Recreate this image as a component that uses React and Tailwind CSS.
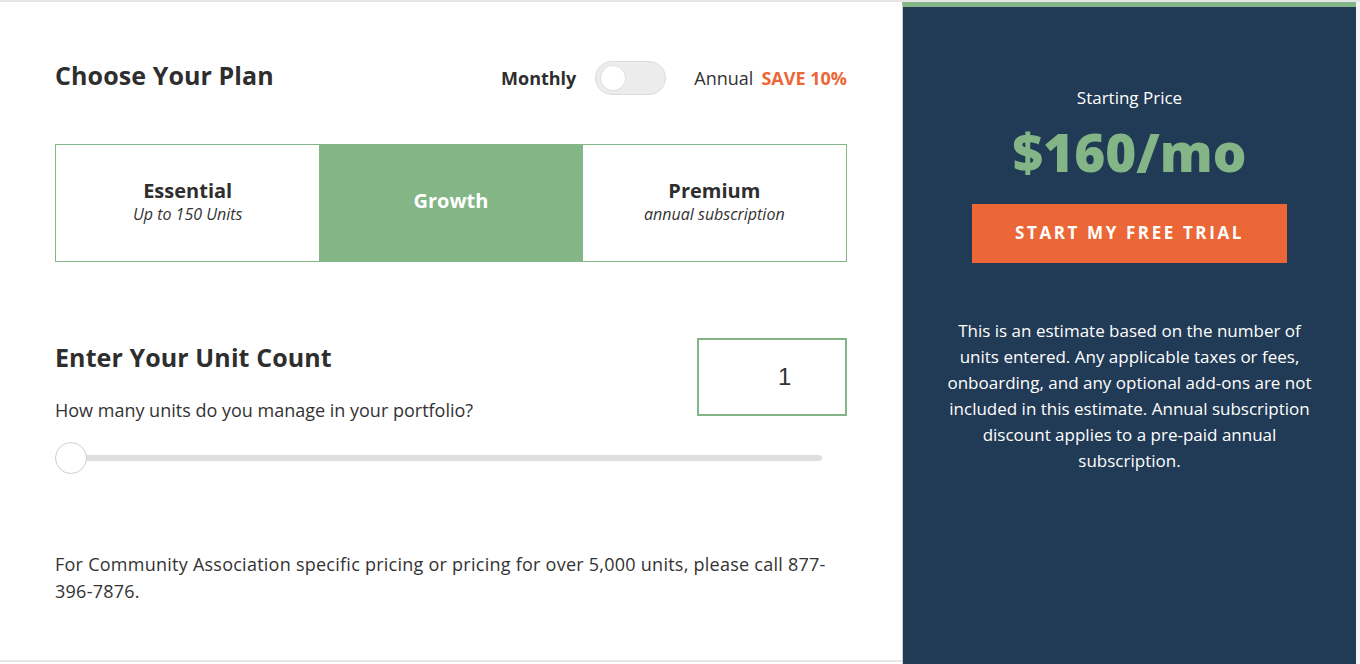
import { useState } from 'react'

const plans = [
  { name: 'Essential', note: 'Up to 150 Units' },
  { name: 'Growth', note: null },
  { name: 'Premium', note: 'annual subscription' },
]

export default function App() {
  const [plan, setPlan] = useState('Growth')
  const [annual, setAnnual] = useState(false)
  const [units, setUnits] = useState(1)

  return (
    <div className="flex h-[664px] w-[1360px] border-t-2 border-[#e6e6e6] bg-white font-['Open_Sans',sans-serif] text-[#333]">
      <section className="mb-[2px] flex flex-1 flex-col border-b-2 border-[#e6e6e6] pl-[55px] pr-[55px]">
        <div className="mt-[55px] flex items-center justify-between">
          <h2 className="mb-[5px] text-[25px] font-bold tracking-[0.1px] text-[#2e2e2e]">Choose Your Plan</h2>
          <div className="flex items-center text-[18px]">
            <span className="font-bold text-[#2e2e2e]">Monthly</span>
            <button
              type="button"
              onClick={() => setAnnual(!annual)}
              className="ml-[19px] flex h-[34px] w-[71px] items-center rounded-full border border-[#dcdcdc] bg-[#ececec] px-[4px]"
            >
              <span
                className={
                  annual
                    ? 'ml-auto h-[26px] w-[26px] rounded-full border border-[#e0e0e0] bg-white'
                    : 'h-[26px] w-[26px] rounded-full border border-[#e0e0e0] bg-white'
                }
              />
            </button>
            <span className="ml-[28px] text-[#333]">Annual</span>
            <span className="ml-[8px] font-bold text-[#ec6737]">SAVE 10%</span>
          </div>
        </div>

        <div className="mt-[44px] grid h-[118px] grid-cols-3 border border-[#84b586]">
          {plans.map((p) => (
            <button
              key={p.name}
              type="button"
              onClick={() => setPlan(p.name)}
              className={
                plan === p.name
                  ? 'flex flex-col items-center justify-center bg-[#84b586] pb-[3px] text-white'
                  : 'flex flex-col items-center justify-center bg-white pb-[4px] text-[#2e2e2e]'
              }
            >
              <span className="text-[20px] font-bold leading-[26px]">{p.name}</span>
              {plan !== p.name && p.note && (
                <span className="text-[16px] italic leading-[20px] text-[#333]">{p.note}</span>
              )}
            </button>
          ))}
        </div>

        <div className="mt-[76px] flex items-start justify-between">
          <div>
            <h2 className="mt-[1px] text-[25px] font-bold tracking-[0.1px] text-[#2e2e2e]">Enter Your Unit Count</h2>
            <p className="mt-[21px] text-[18px]">How many units do you manage in your portfolio?</p>
          </div>
          <input
            value={units}
            onChange={(e) => setUnits(e.target.value)}
            className="h-[78px] w-[150px] border-2 border-[#84b586] pl-[79px] font-['Liberation_Sans',sans-serif] text-[24px] text-[#333] outline-none"
          />
        </div>

        <div className="relative mt-[18px] mr-[25px] h-[32px]">
          <div className="absolute left-0 right-0 top-[13px] h-[6px] rounded-full bg-[#dedede]" />
          <div className="absolute left-0 top-0 h-[32px] w-[32px] rounded-full border border-[#d0d0d0] bg-white" />
        </div>

        <p className="mt-[77px] text-[18px] leading-[27px] tracking-[0.25px]">
          For Community Association specific pricing or pricing for over 5,000 units, please call 877-396-7876.
        </p>
      </section>

      <aside className="flex w-[454px] flex-col items-center border-l border-[#cfcfcf] border-t-[5px] border-t-[#84b586] bg-[#213a55] text-white">
        <p className="mt-[78px] text-[17px]">Starting Price</p>
        <p className="mt-[9px] text-[53px] font-extrabold leading-[64px] text-[#84b586]">$160/mo</p>
        <button
          type="button"
          className="mt-[20px] h-[59px] w-[315px] bg-[#ec6737] text-[17px] font-bold tracking-[2.6px] text-white"
        >
          START MY FREE TRIAL
        </button>
        <p className="mt-[55px] w-[380px] text-center text-[17px] leading-[26px]">
          This is an estimate based on the number of units entered. Any applicable taxes or fees, onboarding, and any
          optional add-ons are not included in this estimate. Annual subscription discount applies to a pre-paid annual
          subscription.
        </p>
      </aside>
      <div className="w-[4px] bg-[#f4f4f4]" />
    </div>
  )
}
